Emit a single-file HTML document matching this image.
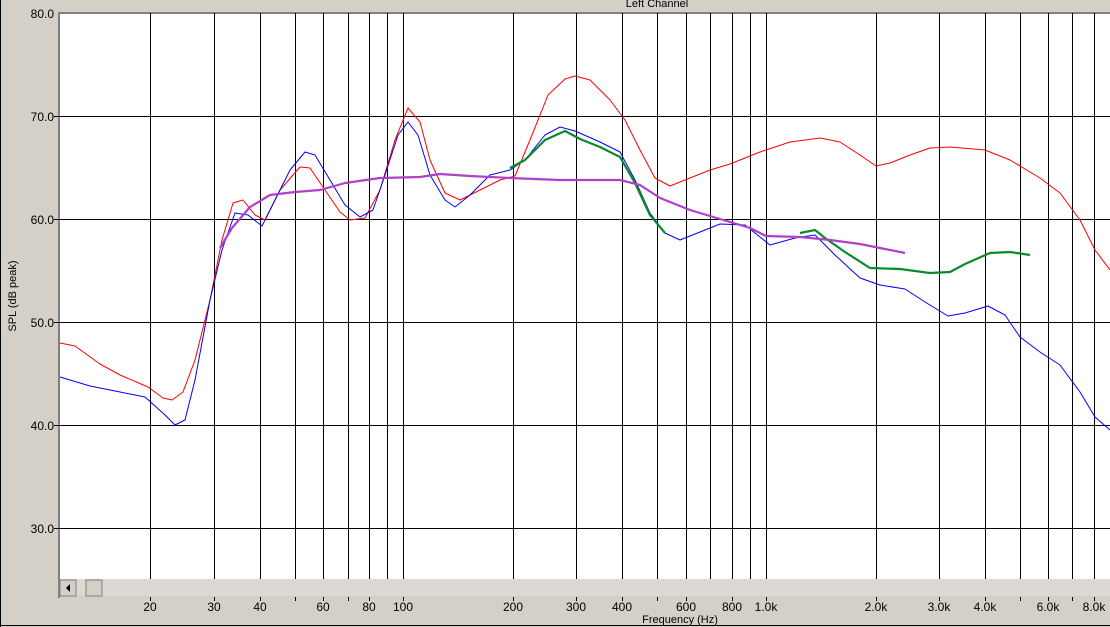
<!DOCTYPE html>
<html><head><style>
body{margin:0;width:1110px;height:627px;overflow:hidden;background:#d4d0c8;font-family:"Liberation Sans",sans-serif}
svg{position:absolute;left:0;top:0}
</style></head><body>
<svg width="1110" height="627" xmlns="http://www.w3.org/2000/svg" font-family="Liberation Sans, sans-serif" font-size="12" fill="#000">
<rect x="0" y="0" width="1110" height="627" fill="#d4d0c8"/>
<line x1="0.5" y1="0" x2="0.5" y2="627" stroke="#000"/>
<line x1="0" y1="625.5" x2="1110" y2="625.5" stroke="#000"/>
<text x="657" y="7" text-anchor="middle" font-size="11">Left Channel</text>
<rect x="60" y="13" width="1050" height="566" fill="#fff"/>
<line x1="59" y1="12" x2="59" y2="598" stroke="#808080" stroke-width="2"/>
<line x1="58" y1="13" x2="1110" y2="13" stroke="#808080" stroke-width="2"/>
<g stroke="#000" stroke-width="1">
<line x1="60" y1="116.5" x2="1110" y2="116.5"/><line x1="60" y1="219.5" x2="1110" y2="219.5"/>
<line x1="60" y1="322.5" x2="1110" y2="322.5"/><line x1="60" y1="425.5" x2="1110" y2="425.5"/>
<line x1="60" y1="528.5" x2="1110" y2="528.5"/>
<g id="v">
<line x1="150.5" y1="13" x2="150.5" y2="579"/><line x1="214.5" y1="13" x2="214.5" y2="579"/>
<line x1="260.5" y1="13" x2="260.5" y2="579"/><line x1="295.5" y1="13" x2="295.5" y2="579"/>
<line x1="323.5" y1="13" x2="323.5" y2="579"/><line x1="348.5" y1="13" x2="348.5" y2="579"/>
<line x1="369.5" y1="13" x2="369.5" y2="579"/><line x1="387.5" y1="13" x2="387.5" y2="579"/>
<line x1="403.5" y1="13" x2="403.5" y2="579"/><line x1="513.5" y1="13" x2="513.5" y2="579"/>
<line x1="576.5" y1="13" x2="576.5" y2="579"/><line x1="622.5" y1="13" x2="622.5" y2="579"/>
<line x1="657.5" y1="13" x2="657.5" y2="579"/><line x1="686.5" y1="13" x2="686.5" y2="579"/>
<line x1="710.5" y1="13" x2="710.5" y2="579"/><line x1="732.5" y1="13" x2="732.5" y2="579"/>
<line x1="750.5" y1="13" x2="750.5" y2="579"/><line x1="766.5" y1="13" x2="766.5" y2="579"/>
<line x1="876.5" y1="13" x2="876.5" y2="579"/><line x1="939.5" y1="13" x2="939.5" y2="579"/>
<line x1="985.5" y1="13" x2="985.5" y2="579"/><line x1="1020.5" y1="13" x2="1020.5" y2="579"/>
<line x1="1048.5" y1="13" x2="1048.5" y2="579"/><line x1="1072.5" y1="13" x2="1072.5" y2="579"/>
<line x1="1094.5" y1="13" x2="1094.5" y2="579"/>
</g>
<g transform="translate(0,0)">
<line x1="150.5" y1="597" x2="150.5" y2="601"/><line x1="214.5" y1="597" x2="214.5" y2="601"/><line x1="260.5" y1="597" x2="260.5" y2="601"/><line x1="295.5" y1="597" x2="295.5" y2="601"/><line x1="323.5" y1="597" x2="323.5" y2="601"/><line x1="348.5" y1="597" x2="348.5" y2="601"/><line x1="369.5" y1="597" x2="369.5" y2="601"/><line x1="403.5" y1="597" x2="403.5" y2="601"/><line x1="513.5" y1="597" x2="513.5" y2="601"/><line x1="576.5" y1="597" x2="576.5" y2="601"/><line x1="622.5" y1="597" x2="622.5" y2="601"/><line x1="657.5" y1="597" x2="657.5" y2="601"/><line x1="686.5" y1="597" x2="686.5" y2="601"/><line x1="732.5" y1="597" x2="732.5" y2="601"/><line x1="766.5" y1="597" x2="766.5" y2="601"/><line x1="876.5" y1="597" x2="876.5" y2="601"/><line x1="939.5" y1="597" x2="939.5" y2="601"/><line x1="985.5" y1="597" x2="985.5" y2="601"/><line x1="1020.5" y1="597" x2="1020.5" y2="601"/><line x1="1048.5" y1="597" x2="1048.5" y2="601"/><line x1="1072.5" y1="597" x2="1072.5" y2="601"/><line x1="1094.5" y1="597" x2="1094.5" y2="601"/>
</g>
<line x1="54" y1="116.5" x2="60" y2="116.5"/><line x1="54" y1="219.5" x2="60" y2="219.5"/><line x1="54" y1="322.5" x2="60" y2="322.5"/><line x1="54" y1="425.5" x2="60" y2="425.5"/><line x1="54" y1="528.5" x2="60" y2="528.5"/>
</g>
<g fill="none" stroke-linejoin="round">
<polyline stroke="#f00" stroke-width="1" points="60,343 75,346 100,364 120,375 148,387 163,398 172,400 183,392 195,360 210,300 222,240 233,203 243,200 255,215 265,220 280,190 300,167 310,168 325,190 340,212 350,220 365,218 380,190 395,140 408,108 420,122 430,160 445,193 460,200 480,190 500,180 515,176 530,140 548,95 565,79 575,76 590,80 610,100 625,120 640,150 655,178 670,186 690,178 710,170 730,164 760,152 790,142 820,138 840,142 860,155 876,166 890,163 910,155 930,148 950,147 985,150 1010,160 1040,178 1060,193 1080,220 1095,250 1110,270"/>
<polyline stroke="#00f" stroke-width="1" points="60,377 90,386 120,392 145,397 165,415 175,425 185,420 195,380 210,300 222,250 235,213 248,215 262,226 275,200 290,170 305,152 315,155 330,180 345,205 360,217 373,210 385,175 398,135 408,122 418,135 430,175 445,200 455,207 470,195 490,175 510,170 525,160 545,135 560,127 575,131 600,142 620,152 635,180 650,213 665,233 680,240 700,232 720,224 745,225 770,245 795,238 815,235 835,255 860,278 880,285 905,289 925,302 948,316 965,313 988,306 1005,315 1020,337 1040,352 1060,365 1080,392 1095,417 1110,430"/>
<polyline stroke="#0a8a2a" stroke-width="2.2" points="510,168 525,160 545,140 565,131 580,139 600,147 620,157 635,183 650,215 665,233"/>
<polyline stroke="#0a8a2a" stroke-width="2.2" points="800,233 815,230 825,238 845,252 870,268 900,269 930,273 950,272 965,264 990,253 1010,252 1030,255"/>
<polyline stroke="#b040c8" stroke-width="2.2" points="220,248 232,228 250,207 270,195 295,192 320,190 345,183 380,178 420,177 440,174 470,176 510,178 560,180 620,180 640,185 660,198 690,210 720,219 750,228 766,236 800,237 830,240 860,244 880,248 905,253"/>
</g>
<rect x="60" y="579" width="1050" height="17" fill="#e8e6e0"/>
<rect x="60" y="579" width="1050" height="17" fill="#d0ccc4" opacity="0.5"/>
<rect x="60" y="580" width="16" height="16" fill="#d4d0c8" stroke="#808080"/>
<polygon points="70,584 66,588 70,592" fill="#000"/>
<rect x="86" y="580" width="16" height="16" fill="#d4d0c8" stroke="#808080"/>
<g font-size="12" text-anchor="end">
<text x="54" y="18">80.0</text><text x="54" y="121">70.0</text><text x="54" y="224">60.0</text><text x="54" y="327">50.0</text><text x="54" y="430">40.0</text><text x="54" y="533">30.0</text>
</g>
<g font-size="12" text-anchor="middle">
<text x="150" y="611">20</text><text x="214" y="611">30</text><text x="260" y="611">40</text><text x="323" y="611">60</text><text x="369" y="611">80</text><text x="403" y="611">100</text><text x="513" y="611">200</text><text x="576" y="611">300</text><text x="622" y="611">400</text><text x="686" y="611">600</text><text x="732" y="611">800</text><text x="766" y="611">1.0k</text><text x="876" y="611">2.0k</text><text x="939" y="611">3.0k</text><text x="985" y="611">4.0k</text><text x="1048" y="611">6.0k</text><text x="1094" y="611">8.0k</text>
</g>
<text x="680" y="623" text-anchor="middle" font-size="11">Frequency (Hz)</text>
<text transform="translate(16,296) rotate(-90)" text-anchor="middle" font-size="11">SPL (dB peak)</text>
</svg>
</body></html>
